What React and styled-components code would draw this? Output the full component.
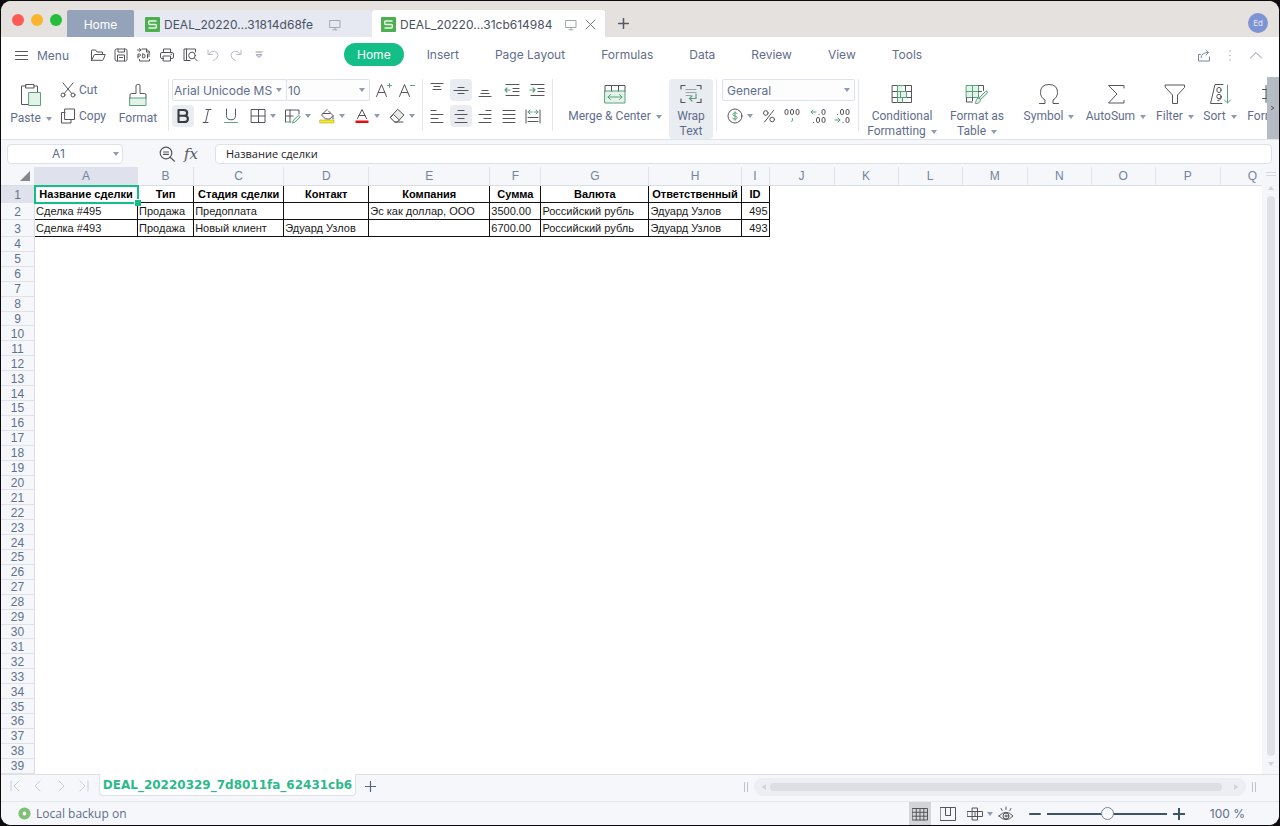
import React, { useState } from "react";
import styled, { createGlobalStyle } from "styled-components";

const ui = '"Inter", "Liberation Sans", sans-serif';
const compact = '"Roboto", "Liberation Sans", sans-serif';
const humanist = '"Open Sans", "Noto Sans", sans-serif';
const ink = "#5f6e8c";
const line = "#56565a";
const green = "#5aa17c";
const mint = "#e3f3ea";
const accent = "#14bf87";

const GlobalStyle = createGlobalStyle`
  *, *::before, *::after { box-sizing: border-box; }
  html, body { margin: 0; background: #0c0a0c; }
  button, input, select { font: inherit; color: inherit; margin: 0; padding: 0; border: 0; background: none; outline: none; }
  button { cursor: pointer; white-space: nowrap; }
  svg { display: block; flex: none; }
`;

const Window = styled.div`
  height: 100vh;
  border: 1px solid #0c0a0c;
  background: #fff;
  border-radius: 11px;
  overflow: hidden;
  display: flex;
  flex-direction: column;
  font-family: ${ui};
  font-size: 12px;
  color: ${ink};
`;

/* ---------- title bar ---------- */
const TitleBar = styled.header`
  flex: none;
  height: 36px;
  background: #e5e1de;
  display: flex;
  align-items: flex-end;
  padding-right: 11px;
`;
const Lights = styled.div`
  display: flex;
  gap: 7px;
  width: 66px;
  height: 36px;
  align-items: center;
  padding: 2px 0 0 11px;
`;
const Light = styled.button`
  width: 12px;
  height: 12px;
  border-radius: 50%;
  background: ${(p) => p.$color};
`;
const HomeTab = styled.button`
  width: 67px;
  height: 27px;
  padding-top: 2px;
  border-radius: 2px 2px 0 0;
  background: #95a3ba;
  color: #fff;
  font-size: 12px;
`;
const FileTab = styled.div`
  height: 27px;
  width: ${(p) => (p.$active ? 233 : 238)}px;
  padding: 2px 8px 0 ${(p) => (p.$active ? 9 : 11)}px;
  border-radius: 3px 3px 0 0;
  background: ${(p) => (p.$active ? "#fff" : "#e6e9f2")};
  color: #4a5163;
  font-size: 12px;
  display: flex;
  align-items: center;
  gap: 4px;
`;
const FileName = styled.span`
  flex: 1;
  white-space: nowrap;
`;
const TabTools = styled.span`
  display: flex;
  align-items: center;
  gap: 8px;
  padding-right: ${(p) => (p.$wide ? 23 : 1)}px;
`;
const NewTab = styled.button`
  width: 36px;
  height: 27px;
  display: grid;
  place-items: center;
`;
const Avatar = styled.button`
  margin: 0 0 4px auto;
  width: 20px;
  height: 20px;
  border-radius: 50%;
  background: #7d93d3;
  color: #e6ebfa;
  font-size: 8px;
`;

/* ---------- menu row ---------- */
const MenuRow = styled.nav`
  flex: none;
  height: 36px;
  display: flex;
  align-items: center;
  padding: 0 13px 0 14px;
`;
const MenuButton = styled.button`
  display: flex;
  align-items: center;
  gap: 9px;
  width: 73px;
`;
const QuickBar = styled.div`
  display: flex;
  align-items: center;
  gap: 3px;
  width: 256px;
`;
const QuickButton = styled.button`
  width: 20px;
  height: 20px;
  display: grid;
  place-items: center;
`;
const Tabs = styled.div`
  display: flex;
  gap: 10px;
  flex: 1;
  padding-bottom: 2px;
`;
const Tab = styled.button`
  height: 23px;
  padding: 0 13px;
  border-radius: 12px;
  background: ${(p) => (p.$active ? accent : "none")};
  color: ${(p) => (p.$active ? "#fff" : ink)};
`;
const MenuRight = styled.div`
  display: flex;
  align-items: center;
  gap: 6px;
`;

/* ---------- ribbon ---------- */
const RibbonWrap = styled.div`
  flex: none;
  display: flex;
  height: 67px;
  padding-top: 4px;
  border-bottom: 1px solid #dfe3ea;
  overflow: hidden;
`;
const Ribbon = styled.div`
  flex: 1;
  min-width: 0;
  display: flex;
  overflow: hidden;
`;
const Group = styled.div`
  flex: none;
  width: ${(p) => p.$w}px;
  height: 62px;
  display: flex;
  padding-left: ${(p) => p.$pad || 0}px;
`;
const Divider = styled.div`
  flex: none;
  width: 1px;
  height: 52px;
  margin-top: 2px;
  background: #e3e6ec;
`;
const BigButton = styled.button`
  flex: none;
  width: ${(p) => p.$w}px;
  height: 60px;
  margin-top: 2px;
  padding-top: 4px;
  display: flex;
  flex-direction: column;
  align-items: center;
  gap: 4px;
  border-radius: 4px;
  font-family: ${compact};
  line-height: 15px;
  background: ${(p) => (p.$on ? "#e9ecf0" : "none")};
`;
const LabelLine = styled.span`
  display: flex;
  align-items: center;
  justify-content: center;
  gap: 5px;
`;
const Stack = styled.div`
  display: flex;
  flex-direction: column;
  padding-top: 2px;
  gap: 4px;
`;
const TextButton = styled.button`
  height: 22px;
  margin-left: 5px;
  display: flex;
  align-items: center;
  gap: 3px;
  font-family: ${compact};
`;
const ToolRow = styled.div`
  display: flex;
  align-items: center;
  height: 22px;
  gap: ${(p) => p.$gap || 0}px;
`;
const Tool = styled.button`
  flex: none;
  width: ${(p) => p.$w || 22}px;
  height: 22px;
  display: flex;
  align-items: center;
  justify-content: center;
  gap: 4px;
  border-radius: 4px;
  background: ${(p) => (p.$on ? "#e9ecf0" : "none")};
`;
const SelectBox = styled.div`
  flex: none;
  width: ${(p) => p.$w}px;
  height: 22px;
  display: flex;
  align-items: center;
  border: 1px solid #dde1ea;
  border-radius: 2px;
  padding: 0 4px 0 1px;
  background: #fdfdfe;
  & + & { margin-left: -1px; }
  select { appearance: none; flex: 1; min-width: 0; height: 20px; padding-left: ${(p) => p.$indent || 0}px; }
`;
const RibbonMore = styled.button`
  flex: none;
  width: 12px;
  height: 62px;
  background: #b6bac5;
  display: grid;
  place-items: center;
`;

/* ---------- formula row ---------- */
const FormulaRow = styled.div`
  flex: none;
  height: 27px;
  display: flex;
  align-items: center;
  padding: 0 7px 0 6px;
  background: #f5f7fa;
`;
const Field = styled.label`
  height: 20px;
  display: flex;
  align-items: center;
  background: #fff;
  border: 1px solid #dde1e9;
  border-radius: 4px;
  input { flex: 1; min-width: 0; }
`;
const NameBox = styled(Field)`
  width: 116px;
  padding-right: 3px;
  input { text-align: center; padding-right: 4px; }
`;
const FormulaTools = styled.div`
  width: 92px;
  display: flex;
  gap: 8px;
  align-items: center;
  justify-content: flex-end;
  padding-right: 17px;
`;
const FormulaField = styled(Field)`
  flex: 1;
  padding: 0 10px;
  color: #1c1c1e;
  font: 11px ${humanist};
`;

/* ---------- grid ---------- */
const SheetArea = styled.main`
  flex: 1;
  min-height: 0;
  display: flex;
`;
const SheetClip = styled.div`
  flex: 1;
  min-width: 0;
  overflow: hidden;
`;
const Sheet = styled.table`
  table-layout: fixed;
  width: 1284px;
  height: 100%;
  border-collapse: separate;
  border-spacing: 0;
  font: 11px "Liberation Sans", Arial, sans-serif;
  color: #1a1a1a;
  th, td { padding: 0; white-space: nowrap; }
`;
const ColHead = styled.th`
  height: 19px;
  font-weight: 400;
  font-size: 12px;
  color: #73849f;
  background: ${(p) => (p.$on ? "#dfe2ec" : "#f5f7fa")};
  border-right: 1px solid #dfe3e9;
  border-bottom: 1px solid #d9dde4;
`;
const Corner = styled(ColHead)`
  svg { margin-left: 18px; }
`;
const RowHead = styled.th`
  && { padding-top: 1px; }
  font-weight: 400;
  font-size: 12px;
  line-height: 12px;
  color: #62718c;
  background: ${(p) => (p.$on ? "#dfe2ec" : "#f5f7fa")};
  border-right: 1px solid #d9dde4;
  border-bottom: 1px solid #dfe3e9;
`;
const DataRow = styled.tr`
  height: 17px;
`;
const Cell = styled.td`
  line-height: 15px;
  text-align: ${(p) => p.$align || "left"};
  font-weight: ${(p) => (p.$head ? 700 : 400)};
  color: ${(p) => (p.$head ? "#000" : "#1a1a1a")};
  border-right: 1px solid #111;
  border-bottom: 1px solid #111;
  && { padding: 1px ${(p) => (p.$head ? 0 : 1)}px 0; }
  ${(p) => p.$selected && `position: relative; outline: 2px solid ${accent}; outline-offset: -1px;`}
`;
const FillHandle = styled.span`
  position: absolute;
  right: -4px;
  bottom: -4px;
  width: 7px;
  height: 7px;
  background: ${accent};
  border: 1px solid #fff;
  border-width: 1px 0 0 1px;
`;
const VScroll = styled.div`
  flex: none;
  width: 17px;
  background: #f5f6fa;
  display: flex;
  flex-direction: column;
  align-items: center;
  padding: 5px 0 7px;
  gap: 5px;
`;
const SplitGrip = styled.span`
  width: 10px;
  height: 4px;
  margin-bottom: 4px;
  border: 1px solid #d5d8e0;
  border-width: 1px 0;
`;
const VThumb = styled.div`
  flex: 1;
  width: 8px;
  border-radius: 4px;
  background: #dfe1e6;
`;

/* ---------- bottom bars ---------- */
const SheetBar = styled.div`
  flex: none;
  height: 27px;
  display: flex;
  border-top: 1px solid #dde0e5;
  background: #f5f7fa;
  padding-right: 23px;
`;
const SheetNav = styled.div`
  display: flex;
  width: 98px;
  padding-left: 2px;
`;
const NavButton = styled.button`
  width: ${(p) => p.$w || 23}px;
  height: 22px;
  display: grid;
  place-items: center;
`;
const SheetTab = styled.button`
  width: 257px;
  height: 22px;
  margin-top: -1px;
  background: #fff;
  border: 1px solid #dde0e5;
  border-top: 0;
  border-radius: 0 0 4px 4px;
  color: #2cba8b;
  font: 700 12px "DejaVu Sans", sans-serif;
`;
const HScroll = styled.div`
  margin: 3px 6px 0 auto;
  width: 492px;
  height: 18px;
  border-radius: 9px;
  background: #eceef3;
  display: flex;
  align-items: center;
  padding: 0 7px;
  gap: 8px;
`;
const HThumb = styled.div`
  flex: 1;
  height: 8px;
  margin: 0 3px 0 -5px;
  border-radius: 4px;
  background: #dcdee3;
`;
const Grip = styled.span`
  width: 4px;
  height: 10px;
  margin: 7px 6px 0 auto;
  border: 1px solid #bcc3d1;
  border-width: 0 1px;
  & + ${HScroll} { margin-left: 0; }
  ${HScroll} + & { margin: 7px 0 0; }
`;
const StatusBar = styled.footer`
  flex: none;
  height: 24px;
  display: flex;
  align-items: center;
  border-top: 1px solid #e4e7ec;
  background: #f5f7fa;
  padding: 0 34px 0 17px;
`;
const Backup = styled.span`
  flex: 1;
  display: flex;
  align-items: center;
  gap: 5px;
  font: 12px ${humanist};
`;
const ViewButton = styled.button`
  width: ${(p) => p.$w || 22}px;
  height: 23px;
  margin-right: ${(p) => p.$gap || 0}px;
  display: flex;
  align-items: center;
  justify-content: center;
  gap: 4px;
  background: ${(p) => (p.$on ? "#d3d5d8" : "none")};
`;
const ZoomRange = styled.input`
  appearance: none;
  width: 120px;
  height: 14px;
  margin: 0 6px;
  &::-webkit-slider-runnable-track { height: 2px; background: #3c5468; }
  &::-webkit-slider-thumb {
    appearance: none;
    width: 13px;
    height: 13px;
    margin-top: -6px;
    border-radius: 50%;
    border: 1px solid #75819c;
    background: #f9fafc;
  }
`;
const ZoomValue = styled.output`
  width: 60px;
  text-align: right;
`;

/* ---------- drawings ---------- */
const Svg = ({ w = 16, h = w, c = line, sw = 1, children }) => (
  <svg width={w} height={h} viewBox={`0 0 ${w} ${h}`} fill="none" stroke={c} strokeWidth={sw} strokeLinecap="round" strokeLinejoin="round" aria-hidden="true">
    {children}
  </svg>
);
const Caret = ({ c = "#8f9bb3" }) => (
  <svg width="6" height="4" viewBox="0 0 6 4" fill={c} aria-hidden="true"><path d="M0 0h6L3 4z" /></svg>
);
const SheetLogo = () => (
  <svg width="15" height="15" viewBox="0 0 15 15" aria-hidden="true">
    <rect width="15" height="15" rx="1" fill="#4caf50" />
    <path d="M11.5 4H4.5Q3.700 4 3.700 4.900V6.600Q3.700 7.500 4.500 7.500H10.500Q11.300 7.500 11.300 8.400V10.100Q11.300 11 10.500 11H3.500" fill="none" stroke="#e9f7e9" strokeWidth="1.500" />
  </svg>
);
const Monitor = () => <Svg w={12} h={12} c="#a3a7b0"><path d="M1 1.500h10v7H1zM6 8.500v2M4 10.800h4" /></Svg>;
const Close = () => <Svg w={11} c="#777b84"><path d="M1 1l9 9M10 1l-9 9" /></Svg>;
const Plus = ({ s = 11, c = "#55585f", sw = 1.500 }) => <Svg w={s} c={c} sw={sw}><path d={`M${s / 2} 0.500V${s - 0.5}M0.500 ${s / 2}H${s - 0.5}`} /></Svg>;
const FolderIcon = () => <Svg><path d="M1.500 13V3.500Q1.500 3 2 3H5.500L7 5h5.500v2.500M1.500 13.300h11q.6 0 .8-.6L15.200 7.500H5q-.6 0-.8.600L1.500 13.300" /></Svg>;
const SaveIcon = () => <Svg><path d="M2 3.500Q2 2 3.500 2h9Q14 2 14 3.500v9q0 1.500-1.500 1.500h-9Q2 14 2 12.500zM5 2v3h6.500V2M4.500 14V8h7v6M6.500 10.500h3" /></Svg>;
const PdfIcon = () => (
  <Svg>
    <path d="M6 2h4.500L13.500 5v.500M10.500 2v3h3M3.500 12.500v1.500h10v-1.500M1.500 3h3.500M3.500 1.500L5 3 3.500 4.500" />
    <path d="M2 11V7h1.500q1 0 1 1.100T3.500 9.200H2M6.700 7v4h.9q1.500 0 1.500-2T7.600 7zM11.500 11V7H14M11.500 9h2" />
  </Svg>
);
const PrintIcon = () => <Svg><path d="M4.500 5.500V2h7v3.500M4.500 11.500H3q-1.500 0-1.500-1.500V7Q1.500 5.500 3 5.500h10q1.500 0 1.500 1.500v3q0 1.500-1.500 1.500h-1.500M4.500 9h7v5h-7zM11.800 7.300h.7" /></Svg>;
const PreviewIcon = () => <Svg><path d="M8 13.500H2V2h11.500v3M4.500 13V2" /><circle cx="10" cy="8.500" r="3.300" /><path d="M12.400 11l2.600 2.600" /></Svg>;
const UndoIcon = () => <Svg w={14} c="#b7bbc4"><path d="M2 2v4.500h4.500M2.300 6.200Q5 2.800 8.300 3.300 12 4 12 7.300T7.500 12.500" /></Svg>;
const RedoIcon = () => <Svg w={14} c="#b7bbc4"><path d="M12 2v4.500H7.500M11.700 6.200Q9 2.800 5.700 3.300 2 4 2 7.300T6.500 12.500" /></Svg>;
const MoreIcon = () => <Svg w={8} h={8} c="#8b91a0"><path d="M1 1h6M1.500 4L4 6.500 6.500 4z" /></Svg>;
const Burger = () => <Svg w={13} h={11}><path d="M0.500 1.500h12M0.500 5.500h12M0.500 9.500h12" /></Svg>;

const PasteIcon = () => (
  <Svg w={22} h={24}>
    <path d="M6 3H1.500v18.500H9M14 3h3.500v6M6 1.500h8V5H6z" />
    <rect x="9" y="9.500" width="11.500" height="13" fill={mint} stroke={green} />
  </Svg>
);
const CutIcon = () => <Svg><path d="M3 1l8.700 10.500M13 1L4.300 11.500" /><circle cx="3" cy="13" r="2" /><circle cx="13" cy="13" r="2" /></Svg>;
const CopyIcon = () => <Svg><path d="M5 4.500H1.500v10.500H11V11.500" /><rect x="5" y="1" width="9.500" height="10.500" /></Svg>;
const FormatIcon = () => (
  <Svg w={20} h={24}>
    <path d="M2 15h16v7.500H2z" fill={mint} stroke={green} />
    <path d="M2 15v-3q0-1.500 1.500-1.500H8V3q0-1.500 1.500-1.500h1.500Q12 1.500 12 3v7.500h4.500q1.500 0 1.500 1.500v3" />
  </Svg>
);
const GrowFont = ({ minus }) => <Svg w={18} h={16}><path d="M1.500 14.500L6.500 2.500l5 12M3.300 10.500h6.500" /><path d={minus ? "M12.500 3.500h4" : "M12.500 3.500h4M14.500 1.500v4"} stroke={green} /></Svg>;
const BoldIcon = () => <Svg sw={2.100} c="#3a3b40"><path d="M3.500 2h5q3.700 0 3.700 2.900T8.500 7.800h-5zM3.500 7.800h5.700q3.700 0 3.700 3.100T9.200 14H3.500z" /></Svg>;
const ItalicIcon = () => <Svg w={12} h={16}><path d="M5 1.500h5M2 14.500h5M7.500 1.500l-3 13" /></Svg>;
const UnderlineIcon = () => <Svg><path d="M3.500 1v6.500q0 4.300 4.500 4.300t4.500-4.300V1" /><path d="M1.500 14.500h13" stroke={green} /></Svg>;
const BordersIcon = () => <Svg><path d="M1.500 1.500h13.500v13H1.500zM8.500 1.500v13M1.500 8h13.500" /></Svg>;
const DrawIcon = () => <Svg w={17} h={16}><path d="M6 2v12M1.500 8H9M1.500 14V2H15v4" /><path d="M1.500 14H7M15 7.500l1.300 1.300-5.500 5.500-2.300.700.700-2.300z" stroke={green} fill={mint} /></Svg>;
const FillIcon = () => <Svg><path d="M8 1.500L2.500 7l4 4h4.500L14 7.500 9.500 3M4 5.500h7M14 8v3" /><rect x="1" y="12" width="14" height="3" fill="#f4ec21" stroke="#b3ad3b" strokeWidth="0.600" /></Svg>;
const ColorIcon = () => <Svg><path d="M3.500 10.500L8 1.500l4.500 9M5 7.500h6" /><rect x="1.500" y="12.500" width="13" height="2.500" fill="#e80c12" stroke="none" /></Svg>;
const EraserIcon = () => <Svg><path d="M9 1.500L15 7l-6.500 7H6L1.500 9.500z" fill="#e6e8ea" /><path d="M1.500 9.500l3-3 5.700 5.400L8.500 14H6z" fill="#fff" /><path d="M6 14h8" /></Svg>;

const Lines = ({ rows, children }) => (
  <Svg sw={1.200}>
    {rows.map(([x1, x2, y]) => <path key={y} d={`M${x1} ${y}H${x2}`} />)}
    {children}
  </Svg>
);
const TopIcon = () => <Lines rows={[[2, 14, 1.500], [5, 11, 4.500], [4, 12, 7.500]]} />;
const MiddleIcon = () => <Lines rows={[[5, 11, 5.500], [1, 15, 8.500], [5, 11, 11.500]]} />;
const BottomIcon = () => <Lines rows={[[5, 11, 8.500], [4, 12, 11.500], [2, 14, 14.500]]} />;
const Indent = ({ right }) => (
  <Lines rows={[[2, 15, 2.500], [9, 15, 6.500], [9, 15, 9.500], [2, 15, 13.500]]}>
    <path d={right ? "M1 8h5M4 6l2 2-2 2" : "M1 8h5M3 6L1 8l2 2"} stroke={green} />
  </Lines>
);
const LeftIcon = () => <Lines rows={[[2, 7, 2.500], [2, 14, 6.500], [2, 9, 10.500], [2, 14, 14.500]]} />;
const CenterIcon = () => <Lines rows={[[5, 11, 2.500], [2, 14, 6.500], [5, 11, 10.500], [2, 14, 14.500]]} />;
const RightIcon = () => <Lines rows={[[9, 14, 2.500], [2, 14, 6.500], [7, 14, 10.500], [2, 14, 14.500]]} />;
const JustifyIcon = () => <Lines rows={[[2, 14, 2.500], [2, 14, 6.500], [2, 14, 10.500], [2, 14, 14.500]]} />;
const SpreadIcon = () => (
  <Svg>
    <path d="M1 2v13M15 2v13M3 9.500h10M3 13.500h10" />
    <path d="M3 4h4M5 2L3 4l2 2M13 4H9M11 2l2 2-2 2" stroke={green} />
  </Svg>
);
const MergeIcon = () => (
  <Svg w={22} h={22}>
    <path d="M1 8h20v12H1z" fill={mint} stroke={green} />
    <path d="M1 8V2.500h20V8M7.500 2.500V8M14.500 2.500V8" />
    <path d="M4 14h14M6.500 11.500L4 14l2.500 2.500M15.500 11.500L18 14l-2.500 2.500" stroke={green} />
  </Svg>
);
const WrapIcon = () => (
  <Svg w={22} h={22} sw={1.200}>
    <path d="M1 6V2.500h4M17 2.500h4V6M1 16v3.500h4M17 19.500h4V16" />
    <path d="M6 6.500h10M6 9.500h10M6 12.500h5" stroke="#9fa3a9" />
    <path d="M16 11v4.500H9.500M12 13l-2.500 2.500L12 18" stroke={green} />
  </Svg>
);
const MoneyIcon = () => <Svg><circle cx="8" cy="8" r="7" /><path d="M10.300 5.800Q9.800 4.800 8 4.800T5.800 6.300Q5.800 7.600 8 8T10.200 9.700Q10.200 11.200 8 11.200T5.700 10.100M8 3.700v8.600" stroke={green} /></Svg>;
const PercentIcon = () => <Svg w={14} h={14}><circle cx="3.800" cy="4" r="2.300" /><circle cx="10.200" cy="10.500" r="2.300" /><path d="M11.500 1.500l-9 11.500" /></Svg>;
const zero = (x, y) => <rect key={`${x}-${y}`} x={x} y={y} width="3" height="5" rx="1.400" />;
const ThousandsIcon = () => <Svg w={16} h={16}>{zero(1, 1.500)}{zero(6.500, 1.500)}{zero(12, 1.500)}<path d="M8.500 10.500v1.500l-.8 1.500" stroke={green} /></Svg>;
const MoreDecimals = () => <Svg><path d="M1 4h5M3 2L1 4l2 2" stroke={green} />{zero(12, 1.500)}{zero(6.500, 9.500)}{zero(12, 9.500)}<path d="M9 6.500v.1M3.500 14.500v.1" /></Svg>;
const LessDecimals = () => <Svg><path d="M1 12h5M4 10l2 2-2 2" stroke={green} />{zero(6.500, 1.500)}{zero(12, 1.500)}{zero(12, 9.500)}<path d="M3.500 6.500v.1M9 14.500v.1" /></Svg>;
const CondIcon = () => (
  <Svg w={22} h={22}>
    <path d="M6.500 2.500h5v6h4v6h-4v5h-5z" fill={mint} stroke="none" />
    <path d="M1.500 2.500h19v17h-19zM1.500 8.500h5M15.500 8.500h5M1.500 14.500h5M11.500 14.500h9M14.500 2.500v6" />
    <path d="M6.500 2.500v17M9.500 8.500v6M11.500 14.500v5M6.500 2.500h6M6.500 8.500h9v6M6.500 14.500h9" stroke={green} />
  </Svg>
);
const TableFormatIcon = () => (
  <Svg w={24} h={22}>
    <path d="M1.500 2.500h12v12h-12z" fill={mint} stroke={green} />
    <path d="M1.500 8.500h12M7.500 2.500v12" stroke={green} />
    <path d="M13.500 2.500h5v5M1.500 14.500v4.500h6M7.500 14.500v3M13.500 8.500h3" />
    <path d="M22 8.500q1 .800 0 2l-6.500 6-1.500-1.500L20.500 8.500q.800-.600 1.500 0zM14 15q-3 0-3.500 5.500 4.500.500 5-4z" fill={mint} stroke={green} />
  </Svg>
);
const OmegaIcon = () => <Svg w={22} h={22}><path d="M1.500 20.500H7v-3.500Q2.500 14.500 2.500 9.500 2.500 1.500 11 1.500t8.500 8q0 5-4.500 7.500v3.500h5.500" /></Svg>;
const SigmaIcon = () => <Svg w={22} h={22}><path d="M19 5V2.500H3.500L12 11l-8.500 9H19v-2.500" /></Svg>;
const FunnelIcon = () => <Svg w={22} h={22}><path d="M1.500 2h19v2.500L13.500 12v8.500h-5V12l-7-7.500z" /></Svg>;
const SortIcon = () => (
  <Svg w={23} h={22}>
    <path d="M14 1.500H6L1.500 20.500H13" />
    <ellipse cx="10" cy="7" rx="2.200" ry="2.600" />
    <circle cx="10" cy="13.500" r="2.200" />
    <path d="M12.200 13.500q.3 4-3.500 4" />
    <path d="M18.500 2v18M15.500 17l3 3 3-3" stroke={green} />
  </Svg>
);
const FrameIcon = () => <Svg w={22} h={22}><path d="M1.500 6.500h19M1.500 15.500h19" /><path d="M5 2.500v17M17 2.500v17" /><path d="M6 7h10v8H6z" fill={mint} stroke={green} /></Svg>;
const ShareIcon = () => <Svg w={14} h={13} c="#7985a0"><path d="M3.500 5.500H1.500v6.500h11V8M4 8.500Q4.500 3.500 11 3.500M9 1.200l2.500 2.300L9 6" /></Svg>;
const DotsIcon = () => <Svg w={14} h={13} c="#a0a5b2" sw={1.500}><path d="M7 2v.1M7 6.500v.1M7 11v.1" /></Svg>;
const UpIcon = () => <Svg w={14} h={10} c="#8d929e"><path d="M1.500 8L7 2.500 12.500 8" /></Svg>;
const LensIcon = () => <Svg w={17} h={16} sw={1.200}><circle cx="7" cy="7" r="5.800" /><path d="M11.200 11.200l4.300 4M4.500 6h5M4.500 8.300h5" /></Svg>;
const Fx = styled.button`
  font: italic 15px "DejaVu Serif", serif;
  line-height: 16px;
  color: #56585e;
`;
const Chevron = ({ d }) => <Svg w={12} h={12} c="#c9cdd6"><path d={d} /></Svg>;
const BackupIcon = () => <svg width="13" height="13" viewBox="0 0 13 13" aria-hidden="true"><circle cx="6.500" cy="6.500" r="4" fill="#fff" stroke="#80bf76" strokeWidth="4.200" /></svg>;
const NormalView = () => <Svg w={16} h={14}><path d="M.500 1.500h15v11.500h-15zM.500 5.300h15M.500 9.200h15M4.300 1.500V13M8 1.500V13M11.800 1.500V13" /></Svg>;
const PageView = () => <Svg w={16} h={14}><path d="M.500 .500h15v13h-15zM5.500.500v8h5v-8M10.500 8.500v-8" /></Svg>;
const CrossView = () => <Svg w={16} h={14}><path d="M5.500 1h5v12h-5zM.500 4.500h15v5h-15zM8 4.500v5" /></Svg>;
const EyeIcon = () => <Svg w={16} h={16}><path d="M1 10Q8 2.500 15 10 8 17.500 1 10zM8 1v2.500M3 2.500l1.200 2M13 2.500l-1.200 2" /><circle cx="8" cy="10" r="3" /><circle cx="8" cy="10" r="1" /></Svg>;
const Tri = ({ d }) => <svg width="6" height="6" viewBox="0 0 6 6" fill="#cfd3db" aria-hidden="true"><path d={d} /></svg>;

/* ---------- data ---------- */
const columns = [
  ["A", 103], ["B", 56], ["C", 90], ["D", 85], ["E", 121], ["F", 51], ["G", 108], ["H", 92], ["I", 28],
  ["J", 65], ["K", 64], ["L", 64], ["M", 65], ["N", 64], ["O", 64], ["P", 65], ["Q", 64],
];
const header = ["Название сделки", "Тип", "Стадия сделки", "Контакт", "Компания", "Сумма", "Валюта", "Ответственный", "ID"];
const deals = [
  ["Сделка #495", "Продажа", "Предоплата", "", "Эс как доллар, ООО", "3500.00", "Российский рубль", "Эдуард Узлов", "495"],
  ["Сделка #493", "Продажа", "Новый клиент", "Эдуард Узлов", "", "6700.00", "Российский рубль", "Эдуард Узлов", "493"],
];
const emptyRows = Array.from({ length: 36 }, (_, i) => i + 4);
const tabs = ["Home", "Insert", "Page Layout", "Formulas", "Data", "Review", "View", "Tools"];

const Big = ({ icon, lines, w, caret = true, on }) => (
  <BigButton $w={w} $on={on}>
    {icon}
    <span>
      {lines.map((text, i) => (
        <LabelLine key={text}>{text}{caret && i === lines.length - 1 && <Caret />}</LabelLine>
      ))}
    </span>
  </BigButton>
);

export default function App() {
  const [active, setActive] = useState("Home");
  const [zoom, setZoom] = useState(100);
  return (
    <Window>
      <GlobalStyle />
      <TitleBar>
        <Lights>
          <Light $color="#fb5b54" aria-label="Close" />
          <Light $color="#fbb52d" aria-label="Minimize" />
          <Light $color="#25bd3c" aria-label="Zoom" />
        </Lights>
        <HomeTab>Home</HomeTab>
        <FileTab>
          <SheetLogo /><FileName>DEAL_20220…31814d68fe</FileName>
          <TabTools $wide><Monitor /></TabTools>
        </FileTab>
        <FileTab $active>
          <SheetLogo /><FileName>DEAL_20220…31cb614984</FileName>
          <TabTools><Monitor /><button aria-label="Close tab"><Close /></button></TabTools>
        </FileTab>
        <NewTab aria-label="New tab"><Plus /></NewTab>
        <Avatar>Ed</Avatar>
      </TitleBar>

      <MenuRow>
        <MenuButton><Burger />Menu</MenuButton>
        <QuickBar>
          <QuickButton aria-label="Open"><FolderIcon /></QuickButton>
          <QuickButton aria-label="Save"><SaveIcon /></QuickButton>
          <QuickButton aria-label="Export to PDF"><PdfIcon /></QuickButton>
          <QuickButton aria-label="Print"><PrintIcon /></QuickButton>
          <QuickButton aria-label="Preview"><PreviewIcon /></QuickButton>
          <QuickButton aria-label="Undo"><UndoIcon /></QuickButton>
          <QuickButton aria-label="Redo"><RedoIcon /></QuickButton>
          <QuickButton aria-label="More"><MoreIcon /></QuickButton>
        </QuickBar>
        <Tabs>
          {tabs.map((t) => (
            <Tab key={t} $active={t === active} onClick={() => setActive(t)}>{t}</Tab>
          ))}
        </Tabs>
        <MenuRight>
          <QuickButton aria-label="Share"><ShareIcon /></QuickButton>
          <QuickButton aria-label="Options"><DotsIcon /></QuickButton>
          <QuickButton aria-label="Collapse"><UpIcon /></QuickButton>
        </MenuRight>
      </MenuRow>

      <RibbonWrap>
        <Ribbon>
          <Group $w={167} $pad={6}>
            <Big icon={<PasteIcon />} lines={["Paste"]} w={48} />
            <Stack>
              <TextButton><CutIcon />Cut</TextButton>
              <TextButton><CopyIcon />Copy</TextButton>
            </Stack>
            <Big icon={<FormatIcon />} lines={["Format"]} w={64} caret={false} />
          </Group>
          <Divider />
          <Group $w={253} $pad={3}>
            <Stack>
              <ToolRow>
                <SelectBox $w={115}>
                  <select aria-label="Font"><option>Arial Unicode MS</option></select><Caret />
                </SelectBox>
                <SelectBox $w={84}>
                  <select aria-label="Font size"><option>10</option></select><Caret />
                </SelectBox>
                <Tool $w={28} aria-label="Grow font"><GrowFont /></Tool>
                <Tool $w={18} aria-label="Shrink font"><GrowFont minus /></Tool>
              </ToolRow>
              <ToolRow>
                <Tool $on aria-label="Bold"><BoldIcon /></Tool>
                <Tool $w={26} aria-label="Italic"><ItalicIcon /></Tool>
                <Tool aria-label="Underline"><UnderlineIcon /></Tool>
                <Tool $w={42} aria-label="Borders"><BordersIcon /><Caret /></Tool>
                <Tool $w={26} aria-label="Draw border"><DrawIcon /><Caret /></Tool>
                <Tool $w={44} aria-label="Fill color"><FillIcon /><Caret /></Tool>
                <Tool $w={26} aria-label="Font color"><ColorIcon /><Caret /></Tool>
                <Tool $w={44} aria-label="Clear"><EraserIcon /><Caret /></Tool>
              </ToolRow>
            </Stack>
          </Group>
          <Divider />
          <Group $w={129} $pad={3}>
            <Stack>
              <ToolRow $gap={2}>
                <Tool aria-label="Align top"><TopIcon /></Tool>
                <Tool $on aria-label="Align middle"><MiddleIcon /></Tool>
                <Tool aria-label="Align bottom"><BottomIcon /></Tool>
                <Tool $w={28} aria-label="Decrease indent"><Indent /></Tool>
                <Tool $w={18} aria-label="Increase indent"><Indent right /></Tool>
              </ToolRow>
              <ToolRow $gap={2}>
                <Tool aria-label="Align left"><LeftIcon /></Tool>
                <Tool $on aria-label="Align center"><CenterIcon /></Tool>
                <Tool aria-label="Align right"><RightIcon /></Tool>
                <Tool aria-label="Justify"><JustifyIcon /></Tool>
                <Tool aria-label="Distribute"><SpreadIcon /></Tool>
              </ToolRow>
            </Stack>
          </Group>
          <Divider />
          <Group $w={163} $pad={8}>
            <Big icon={<MergeIcon />} lines={["Merge & Center"]} w={108} />
            <Big icon={<WrapIcon />} lines={["Wrap", "Text"]} w={44} caret={false} on />
          </Group>
          <Divider />
          <Group $w={141} $pad={5}>
            <Stack>
              <ToolRow>
                <SelectBox $w={133} $indent={3}>
                  <select aria-label="Number format"><option>General</option></select><Caret />
                </SelectBox>
              </ToolRow>
              <ToolRow $gap={2}>
                <Tool $w={35} aria-label="Currency"><MoneyIcon /><Caret /></Tool>
                <Tool $w={20} aria-label="Percent"><PercentIcon /></Tool>
                <Tool aria-label="Thousands separator"><ThousandsIcon /></Tool>
                <Tool $w={26} aria-label="Increase decimals"><MoreDecimals /></Tool>
                <Tool $w={18} aria-label="Decrease decimals"><LessDecimals /></Tool>
              </ToolRow>
            </Stack>
          </Group>
          <Divider />
          <Group $w={460} $pad={4}>
            <Big icon={<CondIcon />} lines={["Conditional", "Formatting"]} w={78} />
            <Big icon={<TableFormatIcon />} lines={["Format as", "Table"]} w={72} />
            <Big icon={<OmegaIcon />} lines={["Symbol"]} w={72} />
            <Big icon={<SigmaIcon />} lines={["AutoSum"]} w={62} />
            <Big icon={<FunnelIcon />} lines={["Filter"]} w={56} />
            <Big icon={<SortIcon />} lines={["Sort"]} w={34} />
            <Big icon={<FrameIcon />} lines={["Format"]} w={70} />
          </Group>
        </Ribbon>
        <RibbonMore aria-label="More tools"><Svg w={6} h={6}><path d="M1.500 1.500L4 3 1.500 4.500" /></Svg></RibbonMore>
      </RibbonWrap>

      <FormulaRow>
        <NameBox><input aria-label="Cell name" defaultValue="A1" /><Caret /></NameBox>
        <FormulaTools>
          <button aria-label="Find"><LensIcon /></button>
          <Fx>fx</Fx>
        </FormulaTools>
        <FormulaField><input aria-label="Formula" defaultValue="Название сделки" /></FormulaField>
      </FormulaRow>

      <SheetArea>
        <SheetClip>
          <Sheet>
            <colgroup>
              <col width="34" />
              {columns.map(([name, w]) => <col key={name} width={w} />)}
            </colgroup>
            <thead>
              <tr>
                <Corner><svg width="12" height="12" viewBox="0 0 12 12" fill="#85878c" aria-hidden="true"><path d="M11 1v10H1z" /></svg></Corner>
                {columns.map(([name]) => <ColHead key={name} $on={name === "A"}>{name}</ColHead>)}
              </tr>
            </thead>
            <tbody>
              <DataRow>
                <RowHead $on>1</RowHead>
                {header.map((t, i) => (
                  <Cell key={t} $head $align="center" $selected={i === 0}>{t}{i === 0 && <FillHandle />}</Cell>
                ))}
              </DataRow>
              {deals.map((deal, r) => (
                <DataRow key={r}>
                  <RowHead>{r + 2}</RowHead>
                  {deal.map((t, i) => <Cell key={i} $align={i === 8 ? "right" : "left"}>{t}</Cell>)}
                </DataRow>
              ))}
              {emptyRows.map((n) => <tr key={n}><RowHead>{n}</RowHead></tr>)}
            </tbody>
          </Sheet>
        </SheetClip>
        <VScroll>
          <SplitGrip />
          <Tri d="M0 5l3-4 3 4z" />
          <VThumb />
          <Tri d="M0 1l3 4 3-4z" />
        </VScroll>
      </SheetArea>

      <SheetBar>
        <SheetNav>
          <NavButton aria-label="First sheet"><Chevron d="M2 1v10M10 1L5 6l5 5" /></NavButton>
          <NavButton aria-label="Previous sheet"><Chevron d="M8 1L3 6l5 5" /></NavButton>
          <NavButton aria-label="Next sheet"><Chevron d="M4 1l5 5-5 5" /></NavButton>
          <NavButton aria-label="Last sheet"><Chevron d="M2 1l5 5-5 5M10 1v10" /></NavButton>
        </SheetNav>
        <SheetTab>DEAL_20220329_7d8011fa_62431cb6</SheetTab>
        <NavButton $w={29} aria-label="Add sheet"><Plus c="#56657f" sw={1.200} /></NavButton>
        <Grip />
        <HScroll>
          <Tri d="M5 0L1 3l4 3z" />
          <HThumb />
          <Tri d="M1 0l4 3-4 3z" />
        </HScroll>
        <Grip />
      </SheetBar>

      <StatusBar>
        <Backup><BackupIcon />Local backup on</Backup>
        <ViewButton $on $gap={6} aria-label="Normal view"><NormalView /></ViewButton>
        <ViewButton $gap={6} aria-label="Page layout view"><PageView /></ViewButton>
        <ViewButton $w={30} aria-label="Reading layout"><CrossView /><Caret /></ViewButton>
        <ViewButton $gap={12} aria-label="Eye protection"><EyeIcon /></ViewButton>
        <button aria-label="Zoom out" onClick={() => setZoom(Math.max(10, zoom - 10))}><Svg w={12} c="#3c5468" sw={2}><path d="M1 6h10" /></Svg></button>
        <ZoomRange type="range" min="10" max="190" value={zoom} aria-label="Zoom" onChange={(e) => setZoom(+e.target.value)} />
        <button aria-label="Zoom in" onClick={() => setZoom(Math.min(190, zoom + 10))}><Plus s={12} c="#3c5468" sw={2} /></button>
        <ZoomValue>{zoom} %</ZoomValue>
      </StatusBar>
    </Window>
  );
}
